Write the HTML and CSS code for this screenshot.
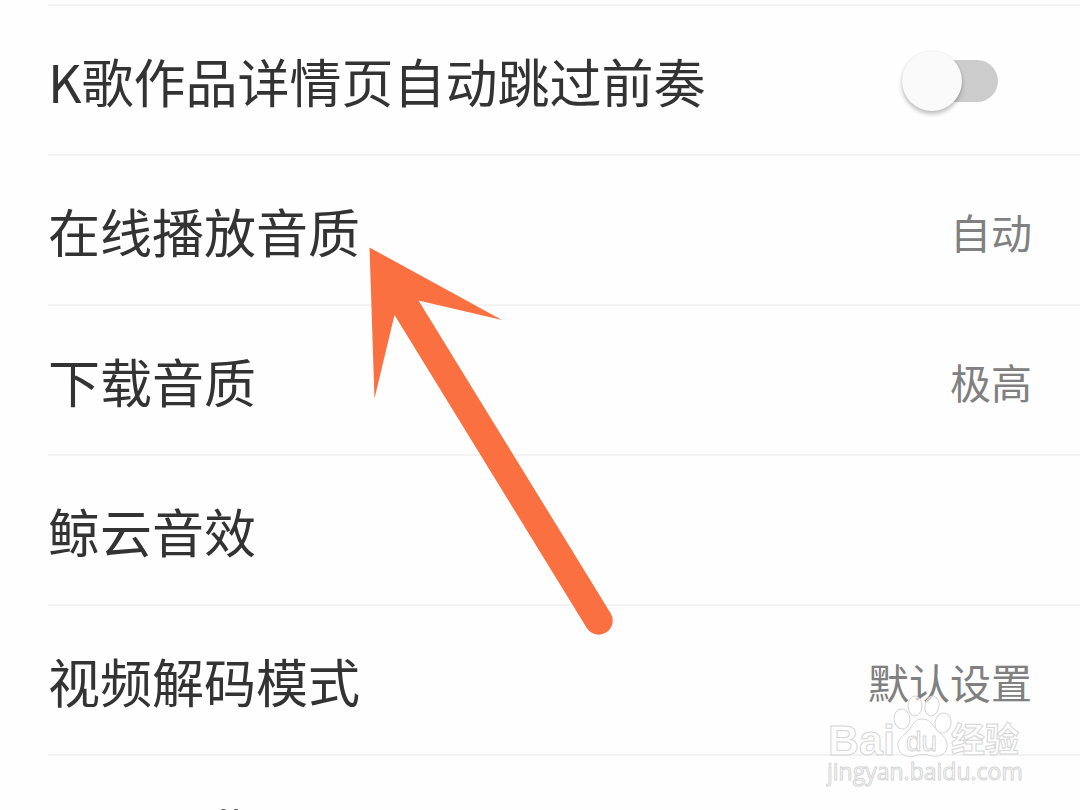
FILE: index.html
```html
<!DOCTYPE html>
<html lang="zh-CN">
<head>
<meta charset="utf-8">
<title>设置</title>
<link rel="stylesheet" href="styles.css">
</head>
<body>
<main class="page">
  <ul class="settings">
    <li class="row">
      <label class="label" for="skip">K歌作品详情页自动跳过前奏</label>
      <input class="switch" type="checkbox" role="switch" id="skip">
    </li>
    <li class="row"><span class="label">在线播放音质</span><span class="value">自动</span></li>
    <li class="row"><span class="label">下载音质</span><span class="value">极高</span></li>
    <li class="row"><span class="label">鲸云音效</span></li>
    <li class="row"><span class="label">视频解码模式</span><span class="value">默认设置</span></li>
    <li class="row"><span class="label">可用云曲</span></li>
  </ul>
  <svg class="arrow" width="244" height="388" viewBox="369 247 244 388" aria-hidden="true">
    <path fill="#fa7040" d="M369.500 247.500L502 320L418.500 300.500L610.600 613.200A14 14 0 0 1 586.800 628L394.500 315L374.500 398.500Z"/>
  </svg>
  <svg class="watermark" width="200" height="100" viewBox="826 692 200 100" role="img" aria-label="Baidu 经验">
    <g class="mark">
      <text class="brand" x="828" y="755">Bai</text>
      <path d="M922 719C931 719 932 726 939 732C945 737 948 742 947 748C945 755 938 757 932 756C926 754 920 754 914 756C906 758 899 754 898 747C897 741 901 737 906 733C913 727 913 719 922 719Z"/>
      <ellipse cx="902" cy="719" rx="8" ry="10" transform="rotate(-6 902 719)"/>
      <ellipse cx="915" cy="706" rx="7" ry="10"/>
      <ellipse cx="932" cy="706" rx="7" ry="10" transform="rotate(12 932 706)"/>
      <ellipse cx="943" cy="723" rx="8" ry="10" transform="rotate(12 943 723)"/>
      <text class="du" x="906" y="751">du</text>
      <text class="exp" x="951" y="752">经验</text>
      <text class="url" x="827" y="780">jingyan.baidu.com</text>
    </g>
  </svg>
</main>
</body>
</html>
```
FILE: styles.css
```css
* { box-sizing: border-box; }
body {
  margin: 0;
  background: #fefefe;
  color: #333;
  font-family: "Noto Sans CJK SC", "Noto Sans", sans-serif;
}
.page {
  position: relative;
  height: 100vh;
  overflow: hidden;
}
.settings {
  list-style: none;
  margin: 0;
  padding: 4px 0 0 48px;
}
.row {
  display: flex;
  align-items: center;
  justify-content: space-between;
  height: 150px;
  padding: 1px 48px 0 0;
  border-top: 2px solid #f3f3f3;
}
.label {
  font-size: 52px;
  line-height: 76px;
}
.value {
  font-size: 41px;
  line-height: 60px;
  color: #808080;
}
.switch {
  appearance: none;
  position: relative;
  width: 84px;
  height: 42px;
  margin: 0 34px 0 0;
  border-radius: 21px;
  background: #ccc;
}
.switch::before {
  content: "";
  position: absolute;
  left: -12px;
  top: -9px;
  width: 60px;
  height: 60px;
  border-radius: 50%;
  background: #fafafa;
  box-shadow: 0 3px 4px rgba(0, 0, 0, 0.25), 0 0 2px rgba(0, 0, 0, 0.08);
}
.switch:checked::before { left: 36px; }
.arrow {
  position: absolute;
  left: 369px;
  top: 247px;
}
.watermark {
  position: absolute;
  right: 54px;
  top: 692px;
}
.mark {
  fill: #fff;
  fill-opacity: 0.6;
  stroke: #d6d6d6;
  stroke-width: 1;
}
.brand {
  font: bold 43px "Liberation Sans", sans-serif;
}
.du {
  font: 28px "Liberation Sans", sans-serif;
}
.exp {
  font: bold 34px "Noto Sans CJK SC", sans-serif;
}
.url {
  font: 23px "Open Sans", sans-serif;
}
```
